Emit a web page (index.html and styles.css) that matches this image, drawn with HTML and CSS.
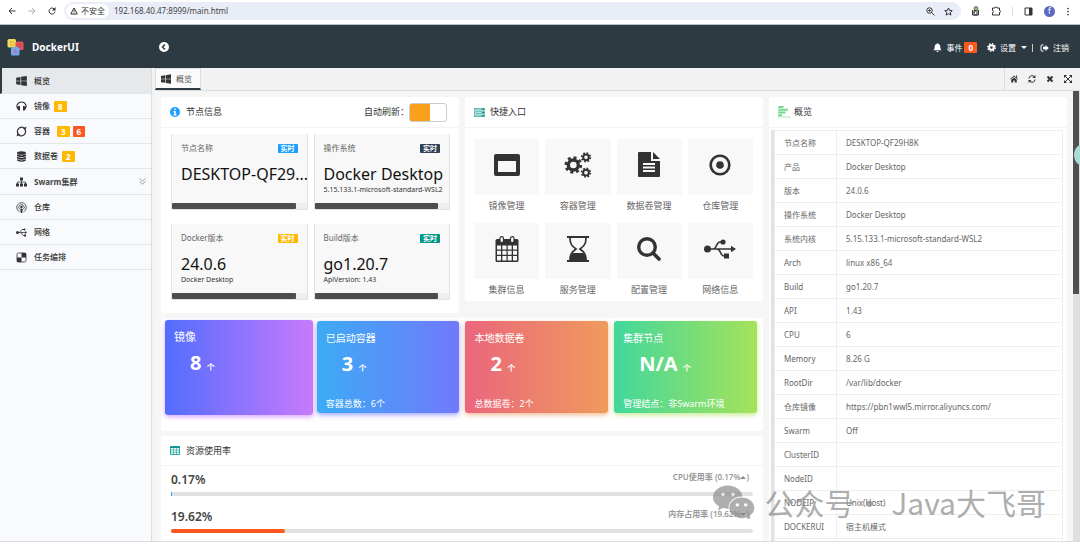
FILE: index.html
```html
<!DOCTYPE html>
<html lang="zh-CN">
<head>
<meta charset="utf-8">
<title>DockerUI</title>
<link rel="stylesheet" href="styles.css">
</head>
<body>
<svg class="sprite" aria-hidden="true">
  <symbol id="i-windows" viewBox="0 0 32 30"><path d="M0 5l13-2v11H0zM15 2.600L32 0v14H15zM0 16h13v11L0 25zM15 16h17v14l-17-2.600z"/></symbol>
  <symbol id="i-bell" viewBox="0 0 16 16"><path d="M8 0l1 1.500c3 .6 4 3 4 5.500 0 3 1 4.500 2.500 6H.5C2 11.500 3 10 3 7c0-2.500 1-4.900 4-5.500zM6 14h4a2 2 0 0 1-4 0z"/></symbol>
  <symbol id="i-cog" viewBox="0 0 16 16"><circle cx="8" cy="8" r="4" fill="none" stroke="currentColor" stroke-width="3.400"/><circle cx="8" cy="8" r="6.400" fill="none" stroke="currentColor" stroke-width="3" stroke-dasharray="2.513"/></symbol>
  <symbol id="i-out" viewBox="0 0 18 16"><path d="M7 2H3.500A1.500 1.500 0 0 0 2 3.500v9A1.500 1.500 0 0 0 3.500 14H7" fill="none" stroke="currentColor" stroke-width="2"/><path d="M6 5.500h5V2l6.500 6-6.500 6v-3.500H6z"/></symbol>
</svg>

<div class="browser">
  <div class="browser-nav">
    <button class="plain" aria-label="后退"><svg width="8" height="8" viewBox="0 0 16 16"><path d="M15 8H2M8 2L2 8l6 6" class="line"/></svg></button>
    <button class="plain dim" aria-label="前进"><svg width="8" height="8" viewBox="0 0 16 16"><path d="M1 8h13M8 2l6 6-6 6" class="line"/></svg></button>
    <button class="plain" aria-label="刷新"><svg width="8" height="8" viewBox="0 0 16 16"><path d="M14 9a6 6 0 1 1-2-5.500L14 5.500" class="line"/><path d="M15 0v7H8z"/></svg></button>
  </div>
  <div class="address">
    <span class="secure"><svg width="8" height="8" viewBox="0 0 16 16"><path d="M8 2l6.500 12h-13z" class="line"/><path d="M7.200 6h1.600v4H7.200zM7.200 11h1.600v1.600H7.200z"/></svg>不安全</span>
    <input class="url" aria-label="地址" value="192.168.40.47:8999/main.html">
    <button class="plain" aria-label="缩放"><svg width="9" height="9" viewBox="0 0 18 18"><circle cx="7" cy="7" r="5.500" class="line"/><path d="M11 11l6 6M4.500 7h5M7 4.500v5" class="line"/></svg></button>
    <button class="plain" aria-label="收藏"><svg width="9" height="9" viewBox="0 0 18 18"><path d="M9 2l2.200 4.800 5.300.6-4 3.500 1.200 5.200L9 13.400l-4.700 2.700 1.200-5.200-4-3.500 5.300-.6z" class="line"/></svg></button>
  </div>
  <div class="browser-tools">
    <button class="plain" aria-label="扩展一"><svg width="9" height="10" viewBox="0 0 18 20"><path d="M3 8v10h12V8" class="line"/><path d="M6 14l6-8M6 9h6v9H6z" fill="none" stroke="#333" stroke-width="2"/><circle cx="10" cy="5" r="4" fill="#8fc27b" stroke="#3c5a35" stroke-width="1.500"/></svg></button>
    <button class="plain" aria-label="扩展程序"><svg width="10" height="10" viewBox="0 0 20 20"><path d="M3 4h5a2 2 0 0 1 4 0h5v5a2 2 0 0 1 0 4v5H3v-5a2 2 0 0 0 0-4z" class="line"/></svg></button>
    <i class="tool-split"></i>
    <button class="plain" aria-label="侧边栏"><svg width="9" height="9" viewBox="0 0 18 18"><path d="M2 2h14v14H2z" class="line"/><path d="M10 2h6v14h-6z"/></svg></button>
    <button class="avatar">f</button>
    <button class="plain" aria-label="菜单"><svg width="4" height="9" viewBox="0 0 4 18"><circle cx="2" cy="3" r="1.700"/><circle cx="2" cy="9" r="1.700"/><circle cx="2" cy="15" r="1.700"/></svg></button>
  </div>
</div>

<header class="topbar">
  <a class="brand" href="#"><svg width="17" height="18" viewBox="0 0 34 36">
    <rect x="1" y="2" width="17" height="17" rx="3" fill="#f3d95c"/><rect x="17" y="7" width="16" height="17" rx="3" fill="#e0545c"/><rect x="8" y="18" width="17" height="17" rx="3" fill="#6fa8f5"/>
    <path d="M7 7h3q4 0 4 4t-4 4H7z" fill="none" stroke="#c9a93a" stroke-width="1.500"/><circle cx="25" cy="15" r="3.500" fill="none" stroke="#b83a42" stroke-width="1.500"/><path d="M13 31l3.500-9 3.500 9M14 28h5" fill="none" stroke="#d1607d" stroke-width="1.500"/></svg>
    <span>DockerUI</span></a>
  <button class="collapse" aria-label="收起"><svg width="10" height="10" viewBox="0 0 20 20"><circle cx="10" cy="10" r="10" fill="#fff"/><path d="M12 5l-5 5 5 5" fill="none" stroke="#2d3a41" stroke-width="3"/></svg></button>
  <nav class="top-links">
    <a href="#"><svg width="9" height="9"><use href="#i-bell"/></svg>事件<b class="badge red">0</b></a>
    <a href="#" class="settings"><svg width="9" height="9"><use href="#i-cog"/></svg>设置<i class="caret"></i></a>
    <i class="bar"></i>
    <a href="#"><svg width="9" height="8"><use href="#i-out"/></svg>注销</a>
  </nav>
</header>

<div class="shell">
  <nav class="sidebar">
    <a class="item active" href="#"><svg width="11" height="10"><use href="#i-windows"/></svg>概览</a>
    <a class="item" href="#"><svg width="11" height="10" viewBox="0 0 22 20"><path d="M4 16C-1 9 4 2 11 2s12 7 7 14" fill="none" stroke="currentColor" stroke-width="2.400"/><path d="M5 10h3v9H5l-2-3v-4zM17 10h-3v9h3l2-3v-4z"/></svg>镜像<b class="badge amber">8</b></a>
    <a class="item" href="#"><svg width="11" height="11" viewBox="0 0 22 22"><path d="M17.500 5A8.500 8.500 0 0 0 4 15M4.500 17A8.500 8.500 0 0 0 18 7" fill="none" stroke="currentColor" stroke-width="2.400"/><path d="M14 5l7-4-2 8zM8 17l-7 4 2-8z"/></svg>容器<span class="badges"><b class="badge amber">3</b><b class="badge red">6</b></span></a>
    <a class="item" href="#"><svg width="11" height="11" viewBox="0 0 22 22"><ellipse cx="11" cy="4" rx="9" ry="3.500"/><path d="M2 6.500q9 4.500 18 0V10q-9 5-18 0zM2 11.500q9 4.500 18 0V15q-9 5-18 0zM2 16.500q9 4.500 18 0V19q-9 5-18 0z"/></svg>数据卷<b class="badge amber">2</b></a>
    <a class="item" href="#"><svg width="11" height="10" viewBox="0 0 22 20"><path d="M8 1h6v6H8zM0 13h6v6H0zM8 13h6v6H8zM16 13h6v6h-6z"/><path d="M11 7v7M3 14v-4h16v4" fill="none" stroke="currentColor" stroke-width="1.500"/></svg><strong>Swarm集群</strong><svg class="more" width="7" height="7" viewBox="0 0 14 14"><path d="M1 1l6 5 6-5M1 7l6 5 6-5" fill="none" stroke="#888" stroke-width="1.700"/></svg></a>
    <a class="item" href="#"><svg width="11" height="11" viewBox="0 0 22 22"><path d="M7 19.500a9.500 9.500 0 1 1 8 0M7 14.500a5.500 5.500 0 1 1 8 0" fill="none" stroke="currentColor" stroke-width="1.600"/><circle cx="11" cy="10" r="2.500"/><path d="M8.500 13.500h5L12.500 22h-3z"/></svg>仓库</a>
    <a class="item" href="#"><svg width="11" height="9" viewBox="0 0 22 18"><circle cx="3" cy="9" r="3"/><path d="M3 9h16M7 9l5-6h4M10 9l4 6h4" fill="none" stroke="currentColor" stroke-width="1.600"/><circle cx="17" cy="3" r="2"/><path d="M16 13h4v4h-4zM18 6l4 3-4 3z"/></svg>网络</a>
    <a class="item" href="#"><svg width="11" height="11" viewBox="0 0 22 22"><rect x="2" y="2" width="18" height="18" rx="3" fill="none" stroke="currentColor" stroke-width="1.600"/><path d="M11 2h9v9h-9zM2 11h9v9H2z"/></svg>任务编排</a>
  </nav>

  <main class="main">
    <div class="tabs">
      <button class="tab"><svg width="10" height="10"><use href="#i-windows"/></svg>概览</button>
      <div class="tab-tools">
        <button class="plain" aria-label="主页"><svg width="8" height="8" viewBox="0 0 16 16"><path d="M8 1l8 7-1 1-7-6-7 6-1-1zM12 1h2v5l-2-2zM8 5l5.500 4.500V15h-4v-4h-3v4h-4V9.500z"/></svg></button>
        <button class="plain" aria-label="刷新页面"><svg width="8" height="8" viewBox="0 0 16 16"><path d="M2 7a6 6 0 0 1 11-3M14 9a6 6 0 0 1-11 3" class="line"/><path d="M15 0v6H9zM1 16v-6h6z"/></svg></button>
        <button class="plain" aria-label="关闭"><svg width="8" height="8" viewBox="0 0 16 16"><path d="M3 3l10 10M13 3L3 13" fill="none" stroke="currentColor" stroke-width="4"/></svg></button>
        <button class="plain" aria-label="全屏"><svg width="8" height="8" viewBox="0 0 16 16"><path d="M2 2l12 12M14 2L2 14" class="line"/><path d="M0 0h6L0 6zM16 0v6l-6-6zM0 16v-6l6 6zM16 16h-6l6-6z"/></svg></button>
      </div>
    </div>

    <div class="content">
      <div class="scroll">
        <div class="columns">
          <div class="left">
            <div class="pair">
              <section class="card">
                <div class="card-head">
                  <svg width="10" height="10" viewBox="0 0 20 20"><circle cx="10" cy="10" r="10" fill="#1e9fff"/><path d="M8.500 3h3v3h-3zM7 8h4.500v6.500H13V17H7v-2.500h1.500v-4H7z" fill="#fff"/></svg>
                  <h2>节点信息</h2>
                  <label class="auto">自动刷新：<input type="checkbox" class="switch" checked></label>
                </div>
                <div class="infos">
                  <article class="info"><div class="info-body"><div class="info-head">节点名称<span class="tag blue">实时</span></div><p class="big">DESKTOP-QF29...</p></div><div class="track"><i></i></div></article>
                  <article class="info"><div class="info-body"><div class="info-head">操作系统<span class="tag navy">实时</span></div><p class="big">Docker Desktop</p><p class="small">5.15.133.1-microsoft-standard-WSL2</p></div><div class="track"><i></i></div></article>
                  <article class="info"><div class="info-body"><div class="info-head">Docker版本<span class="tag amber">实时</span></div><p class="big">24.0.6</p><p class="small">Docker Desktop</p></div><div class="track"><i></i></div></article>
                  <article class="info"><div class="info-body"><div class="info-head">Build版本<span class="tag teal">实时</span></div><p class="big">go1.20.7</p><p class="small">ApiVersion: 1.43</p></div><div class="track"><i></i></div></article>
                </div>
              </section>

              <section class="card shortcuts">
                <div class="card-head">
                  <svg width="11" height="9" viewBox="0 0 22 18"><path d="M0 0h22v5H0zM0 6.500h22v5H0zM0 13h22v5H0z" fill="#4db3a8"/><path d="M2 2.500h13M2 9h13M2 15.500h13" stroke="#d5eeeb" stroke-width="1.500"/><path d="M17 2.500h3M17 9h3M17 15.500h3" stroke="#008577" stroke-width="2"/></svg>
                  <h2>快捷入口</h2>
                </div>
                <div class="quick">
                  <a href="#"><span class="tile"><svg width="26" height="22" viewBox="0 0 26 22"><path fill-rule="evenodd" d="M2 0h22q2 0 2 2v18q0 2-2 2H2q-2 0-2-2V2q0-2 2-2zM4 7v11h18V7z"/></svg></span>镜像管理</a>
                  <a href="#"><span class="tile"><svg width="28" height="28" viewBox="0 0 84 84"><g fill="none" stroke="currentColor"><circle cx="28" cy="42" r="15" stroke-width="10"/><circle cx="28" cy="42" r="22.500" stroke-width="8" stroke-dasharray="8.836"/><circle cx="66" cy="19" r="8.500" stroke-width="6"/><circle cx="66" cy="19" r="13" stroke-width="5" stroke-dasharray="5.105"/><circle cx="66" cy="65" r="8.500" stroke-width="6"/><circle cx="66" cy="65" r="13" stroke-width="5" stroke-dasharray="5.105"/></g></svg></span>容器管理</a>
                  <a href="#"><span class="tile"><svg width="22" height="26" viewBox="0 0 22 26"><path fill-rule="evenodd" d="M1 0h12v9h9v15q0 1-1 1H1q-1 0-1-1V1q0-1 1-1zM5 11v2h12v-2zM5 14.500v2h12v-2zM5 18v2h12v-2z"/><path d="M15 0l7 7h-7z"/></svg></span>数据卷管理</a>
                  <a href="#"><span class="tile"><svg width="22" height="22" viewBox="0 0 22 22"><circle cx="11" cy="11" r="9.300" fill="none" stroke="currentColor" stroke-width="2.600"/><circle cx="11" cy="11" r="3.800"/></svg></span>仓库管理</a>
                  <a href="#"><span class="tile"><svg width="24" height="26" viewBox="0 0 24 26"><path fill-rule="evenodd" d="M2 3h20q1.500 0 1.500 1.500v20Q23.500 26 22 26H2Q.5 26 .5 24.500v-20Q.5 3 2 3zM2 9.500v4h4v-4zM7.300 9.500v4h4.200v-4zM12.700 9.500v4h4v-4zM18 9.500v4h4v-4zM2 14.800v4h4v-4zM7.300 14.800v4h4.200v-4zM12.700 14.800v4h4v-4zM18 14.800v4h4v-4zM2 20v4.500h4V20zM7.300 20v4.500h4.200V20zM12.700 20v4.500h4V20zM18 20v4.500h4V20z"/><rect x="5" y=".7" width="3.500" height="6" rx="1.700" fill="#f8f8f8" stroke="currentColor" stroke-width="1.200"/><rect x="15.500" y=".7" width="3.500" height="6" rx="1.700" fill="#f8f8f8" stroke="currentColor" stroke-width="1.200"/></svg></span>集群信息</a>
                  <a href="#"><span class="tile"><svg width="22" height="26" viewBox="0 0 22 26"><path d="M0 0h22v2H0zM0 24h22v2H0z"/><path d="M3 2c0 6 2 8 6 11-4 3-6 5-6 11M19 2c0 6-2 8-6 11 4 3 6 5 6 11" fill="none" stroke="currentColor" stroke-width="1.700"/><path d="M3 24c0-3 1-5 2.500-7h11c1.500 2 2.500 4 2.500 7z"/></svg></span>服务管理</a>
                  <a href="#"><span class="tile"><svg width="24" height="24" viewBox="0 0 24 24"><circle cx="10" cy="10" r="8.300" fill="none" stroke="currentColor" stroke-width="3.400"/><path d="M16 16l6 6" stroke="currentColor" stroke-width="3.600" stroke-linecap="round"/></svg></span>配置管理</a>
                  <a href="#"><span class="tile"><svg width="32" height="22" viewBox="0 0 32 22"><circle cx="3.500" cy="11" r="3.500"/><path d="M3 11h25M9 11c4 0 3-7 7-7h3M13 11c4 0 3 7 7 7h2" fill="none" stroke="currentColor" stroke-width="1.600"/><circle cx="19" cy="4" r="2.600"/><path d="M20 15.500h5v5h-5zM27 7.700l5 3.300-5 3.300z"/></svg></span>网络信息</a>
                </div>
              </section>
            </div>

            <section class="card stats">
              <article class="stat violet"><h3>镜像</h3><p class="num">8 <small>个</small></p></article>
              <article class="stat azure"><h3>已启动容器</h3><p class="num">3 <small>个</small></p><p class="foot">容器总数：6个</p></article>
              <article class="stat coral"><h3>本地数据卷</h3><p class="num">2 <small>个</small></p><p class="foot">总数据卷：2个</p></article>
              <article class="stat lime"><h3>集群节点</h3><p class="num">N/A <small>个</small></p><p class="foot">管理结点：非Swarm环境</p></article>
            </section>

            <section class="card usage">
              <div class="card-head">
                <svg width="10" height="9" viewBox="0 0 20 18"><path d="M1 1h18v16H1z" fill="#e5f5f3" stroke="#009688" stroke-width="1.600"/><path d="M0 2.500h20" stroke="#009688" stroke-width="3"/><path d="M1 8h18M1 12.500h18M7 3v14M13 3v14" stroke="#3aa99e" stroke-width="1.300"/></svg>
                <h2>资源使用率</h2>
              </div>
              <div class="meters">
                <div class="meter"><div class="meter-head"><strong>0.17%</strong><span>CPU使用率 (0.17%<i class="tri up"></i>)</span></div><div class="meter-track"><i class="fill-blue" style="width:0.17%"></i></div></div>
                <div class="meter"><div class="meter-head"><strong>19.62%</strong><span>内存占用率 (19.62%<i class="tri down"></i>)</span></div><div class="meter-track"><i class="fill-red" style="width:19.62%"></i></div></div>
              </div>
            </section>
          </div>

          <section class="card overview">
            <div class="card-head">
              <svg width="13" height="12" viewBox="0 0 26 24"><path d="M0 0h11v4H0zM0 5.500h20v4H0zM0 11h15v4H0zM0 16.500h8v4H0z" fill="#74d68f"/><path d="M0 22h25M1 0v22" stroke="#a7e5b8" stroke-width="2"/></svg>
              <h2>概览</h2>
            </div>
            <div class="quote">
              <table>
                <tr><th>节点名称</th><td>DESKTOP-QF29H8K</td></tr>
                <tr><th>产品</th><td>Docker Desktop</td></tr>
                <tr><th>版本</th><td>24.0.6</td></tr>
                <tr><th>操作系统</th><td>Docker Desktop</td></tr>
                <tr><th>系统内核</th><td>5.15.133.1-microsoft-standard-WSL2</td></tr>
                <tr><th>Arch</th><td>linux x86_64</td></tr>
                <tr><th>Build</th><td>go1.20.7</td></tr>
                <tr><th>API</th><td>1.43</td></tr>
                <tr><th>CPU</th><td>6</td></tr>
                <tr><th>Memory</th><td>8.26 G</td></tr>
                <tr><th>RootDir</th><td>/var/lib/docker</td></tr>
                <tr><th>仓库镜像</th><td>https://pbn1wwl5.mirror.aliyuncs.com/</td></tr>
                <tr><th>Swarm</th><td>Off</td></tr>
                <tr><th>ClusterID</th><td></td></tr>
                <tr><th>NodeID</th><td></td></tr>
                <tr><th>NODEIP</th><td>Unix(Host)</td></tr>
                <tr><th>DOCKERUI</th><td>宿主机模式</td></tr>
                <tr><th></th><td></td></tr>
              </table>
            </div>
          </section>
        </div>
      </div>
      <div class="scrollbar"><i></i></div>
    </div>
  </main>
</div>

<div class="bubble"></div>
<div class="watermark"><svg width="42" height="35" viewBox="0 0 126 102"><path fill-rule="evenodd" d="M44 0c25 0 44 16 44 33-24 0-44 16-41 37-6 0-12-1-17-3L15 76l3-14C7 56 0 46 0 35 0 16 20 0 44 0zM30 21a5.500 5.500 0 1 0 .1 0zM60 21a5.500 5.500 0 1 0 .1 0z"/><path fill-rule="evenodd" d="M86 36c21 0 38 14 38 31 0 10-6 18-14 24l3 10-12-6c-5 2-10 3-15 3-21 0-37-14-37-31s16-31 37-31zM73 53a5 5 0 1 0 .1 0zM98 53a5 5 0 1 0 .1 0z"/></svg><span>公众号· Java大飞哥</span></div>
</body>
</html>
```

FILE: styles.css
```css
* { box-sizing: border-box; }
html, body { height: 100%; }
body {
  margin: 0;
  padding-bottom: 6px;
  display: flex;
  flex-direction: column;
  overflow: hidden;
  background: #fff;
  color: #444;
  font: 8px/12px "Noto Sans", "Noto Sans CJK SC", sans-serif;
}
h2, h3, p { margin: 0; font-weight: 400; }
a { color: inherit; text-decoration: none; }
svg { fill: currentColor; flex: none; display: block; }
button, input { font: inherit; color: inherit; }
.sprite { position: absolute; width: 0; height: 0; }
.line { fill: none; stroke: currentColor; stroke-width: 2; }
.plain { display: flex; padding: 0; border: 0; background: none; color: #333; }
.dim { color: #aaa; }

/* Browser bar */
.browser { display: flex; align-items: center; flex: none; height: 25px; padding-bottom: 2px; border-bottom: 1px solid #b9c0c4; }
.browser-nav { display: flex; gap: 12px; padding: 0 8px 0 8px; }
.address { flex: 1; display: flex; align-items: center; gap: 9px; height: 18px; padding: 0 8px 0 2px; border-radius: 9px; background: #e9edf7; }
.secure { display: flex; align-items: center; gap: 3px; height: 14px; margin-right: -4px; padding: 0 4px; border-radius: 7px; background: #fff; color: #333; }
.url { flex: 1; min-width: 0; padding: 0; border: 0; background: none; outline: 0; color: #444; }
.browser-tools { display: flex; align-items: center; gap: 11px; padding: 0 10px; }
.tool-split { width: 1px; height: 9px; background: #cfdcf5; }
.avatar { width: 11px; height: 11px; padding: 0; border: 0; border-radius: 50%; background: #5c6bc0; color: #fff; line-height: 10px; }

/* Header */
.topbar { display: flex; align-items: center; flex: none; height: 43px; padding: 0 11px 0 7px; background: #2d3a41; color: #fff; }
.brand { display: flex; align-items: center; gap: 8px; width: 152px; font-size: 10px; font-weight: 700; }
.collapse { padding: 0; border: 0; background: none; }
.top-links { display: flex; align-items: center; gap: 5px; margin-left: auto; padding-top: 2px; }
.top-links a { display: flex; align-items: center; gap: 4px; }
.top-links .settings { margin-left: 5px; }
.caret { margin-left: 1px; border: 3px solid transparent; border-top-color: #fff; border-bottom: 0; }
.bar { width: 1px; height: 8px; background: #d8c9a8; }
.settings + .bar { margin-right: 2px; }
.top-links .badge { margin-left: -2px; }
.badge { display: inline-block; min-width: 12px; padding: 0 4px; border-radius: 1px; color: #fff; font-size: 8px; line-height: 11px; text-align: center; }
.amber { background: #ffb800; }
.red { background: #ff5722; }
.blue { background: #1e9fff; }
.navy { background: #2f4056; }
.teal { background: #009688; }

/* Sidebar */
.shell { flex: 1; min-height: 0; display: flex; border-bottom: 1px solid #ddd; }
.sidebar { width: 152px; flex: none; background: #f8fafd; border-right: 1px solid #ddd; color: #333; font-weight: 500; }
.item { display: flex; align-items: center; gap: 7px; height: 25px; padding: 0 5px 0 16px; border-bottom: 1px solid #e4e6e9; }
.item:nth-child(4n + 1) { height: 26px; }
.item .badge { margin-left: -3px; }
.item .badges .badge { margin-left: 0; }
.item strong { color: #444; }
.item.active { padding-left: 14px; border-left: 2px solid #2d3a41; background: #e6e9ec; }
.badges { display: flex; gap: 3px; }
.more { margin-left: auto; }

/* Tabs */
.main { flex: 1; min-width: 0; display: flex; flex-direction: column; padding-left: 3px; background: #f3f3f3; }
.tabs { display: flex; flex: none; height: 23px; border-bottom: 1px solid #ddd; background: #f2f2f2; }
.tab { display: flex; align-items: center; gap: 5px; padding: 0 8px 0 5px; border: 1px solid #ddd; border-bottom: 2px solid #2d3a41; background: #fafafa; color: #555; }
.tab svg { color: #333; }
.tab-tools { display: flex; align-items: center; gap: 10px; margin-left: auto; padding: 0 8px 0 5px; border-left: 1px solid #ddd; }

/* Content */
.content { flex: 1; min-height: 0; display: flex; background: #f6f6f6; }
.scroll { flex: 1; min-width: 0; overflow: hidden; padding: 6px; }
.scrollbar { width: 7px; border-right: 1px solid #ddd; background: #e0e0e0; }
.scrollbar i { display: block; width: 6px; height: 45%; background: #4f4f4f; }
.columns { display: grid; grid-template-columns: minmax(0, 602fr) minmax(0, 298fr); gap: 6px; }
.left { display: flex; flex-direction: column; gap: 5px; }
.pair { display: grid; grid-template-columns: repeat(2, minmax(0, 1fr)); gap: 6px; align-items: start; }
.card { border-radius: 3px; background: #fff; }
.card-head { display: flex; align-items: center; gap: 6px; height: 31px; padding: 0 12px 0 9px; border-bottom: 1px solid #f3f3f3; color: #333; }
.card-head h2 { font-size: 9px; line-height: 12px; }
.shortcuts .card-head, .overview .card-head { gap: 5px; }
.overview .card-head { gap: 3px; }
.auto { display: flex; align-items: center; margin-left: auto; font-size: 9px; }
.switch { appearance: none; width: 38px; height: 19px; margin: 0; border: 1px solid #ccc; border-radius: 3px; background: linear-gradient(90deg, #f9a11b 20px, #fff 20px); }

/* Node info */
.infos { display: grid; grid-template-columns: repeat(2, minmax(0, 1fr)); gap: 14px 6px; padding: 6px 9px 13px 10px; }
.info { display: flex; flex-direction: column; height: 76px; overflow: hidden; border: solid #e2e2e2; border-width: 0 1px; background: #f8f8f8; color: #111; }
.info-body { flex: 1; padding: 8px 0 0 9px; white-space: nowrap; }
.info-head { display: flex; justify-content: space-between; align-items: center; padding-right: 9px; color: #666; }
.tag { padding: 0 3px; border-radius: 1px; color: #fff; font-size: 7px; font-weight: 700; line-height: 9px; }
.big { margin-top: 10px; font-size: 16px; line-height: 21px; }
.small { font-size: 7px; line-height: 9px; color: #333; }
.track { height: 7px; border: 1px solid #e2e2e2; border-width: 0 0 1px; background: #eee; }
.track i { display: block; width: 92%; height: 6px; border-radius: 1px; background: #4d4d4d; }

/* Shortcuts */
.quick { display: grid; grid-template-columns: repeat(4, 1fr); gap: 11px 6px; padding: 11px 10px 5px 9px; }
.quick a { font-size: 9px; line-height: 12px; color: #666; text-align: center; }
.tile { display: flex; align-items: center; justify-content: center; height: 56px; margin-bottom: 5px; padding-bottom: 5px; border-radius: 1px; background: #f8f8f8; color: #333; }

/* Statistics */
.stats { display: grid; grid-template-columns: 146fr 143fr 143fr 143fr; gap: 6px; padding: 3px 6px 18px 4px; }
.stat { display: flex; flex-direction: column; height: 92px; padding: 10px 9px 3px; border-radius: 3px; color: #fff; }
.stat h3 { font-size: 10px; line-height: 14px; }
.num { padding-left: 16px; font-size: 20px; font-weight: 700; line-height: 38px; }
.num small { font-size: 8px; }
.foot { margin-top: auto; font-size: 9px; line-height: 13px; }
.violet { height: 95px; margin: -1px -2px -2px 0; background: linear-gradient(90deg, #536dfe, #c77afc); box-shadow: 0 2px 5px #c77afcaa; }
.violet h3 { font-size: 11px; }
.azure { background: linear-gradient(90deg, #3cabf5, #7179fb); box-shadow: 0 2px 5px #7179fbaa; }
.coral { background: linear-gradient(90deg, #ea667d, #ef9b5c); box-shadow: 0 2px 5px #ef9b5caa; }
.lime { background: linear-gradient(90deg, #42d79c, #a6e25b); box-shadow: 0 2px 5px #a6e25baa; }

/* Usage */
.usage .card-head { height: 30px; }
.meters { display: grid; gap: 13px; padding: 6px 10px 20px; }
.meter-head { display: flex; justify-content: space-between; padding-right: 4px; margin-bottom: 4px; }
.meter-head strong { font-size: 12px; font-weight: 600; line-height: 16px; color: #444; }
.meter-head span { font-weight: 600; line-height: 10px; color: #999; }
.meter-track { height: 4px; border-radius: 2px; background: #e2e2e2; }
.meter-track i { display: block; height: 4px; min-width: 1px; border-radius: 2px; }
.fill-blue { background: #1e9fff; }
.fill-red { background: #ff5722; }
.tri { display: inline-block; vertical-align: middle; border: 3px solid transparent; }
.up { border-top: 0; border-bottom-color: #888; }
.down { border-bottom: 0; border-top-color: #888; }

/* Overview table */
.quote { margin: 2px 4px 0 2px; border-left: 3px solid #e2e2e2; }
table { width: 100%; border-collapse: collapse; table-layout: fixed; color: #666; }
th, td { height: 24px; padding: 0 9px; border: 1px solid #eee; font-weight: 400; text-align: left; white-space: nowrap; }
th { width: 62px; }

/* Floating layers */
.bubble { position: absolute; top: 143px; right: -18px; width: 24px; height: 24px; border-radius: 50%; background: #a9dcd9; }
.watermark { position: absolute; right: 34px; bottom: 24px; display: flex; align-items: center; gap: 9px; color: #8c8c8c; opacity: .7; font: 30px/44px "Noto Sans CJK SC", sans-serif; white-space: nowrap; }
```
